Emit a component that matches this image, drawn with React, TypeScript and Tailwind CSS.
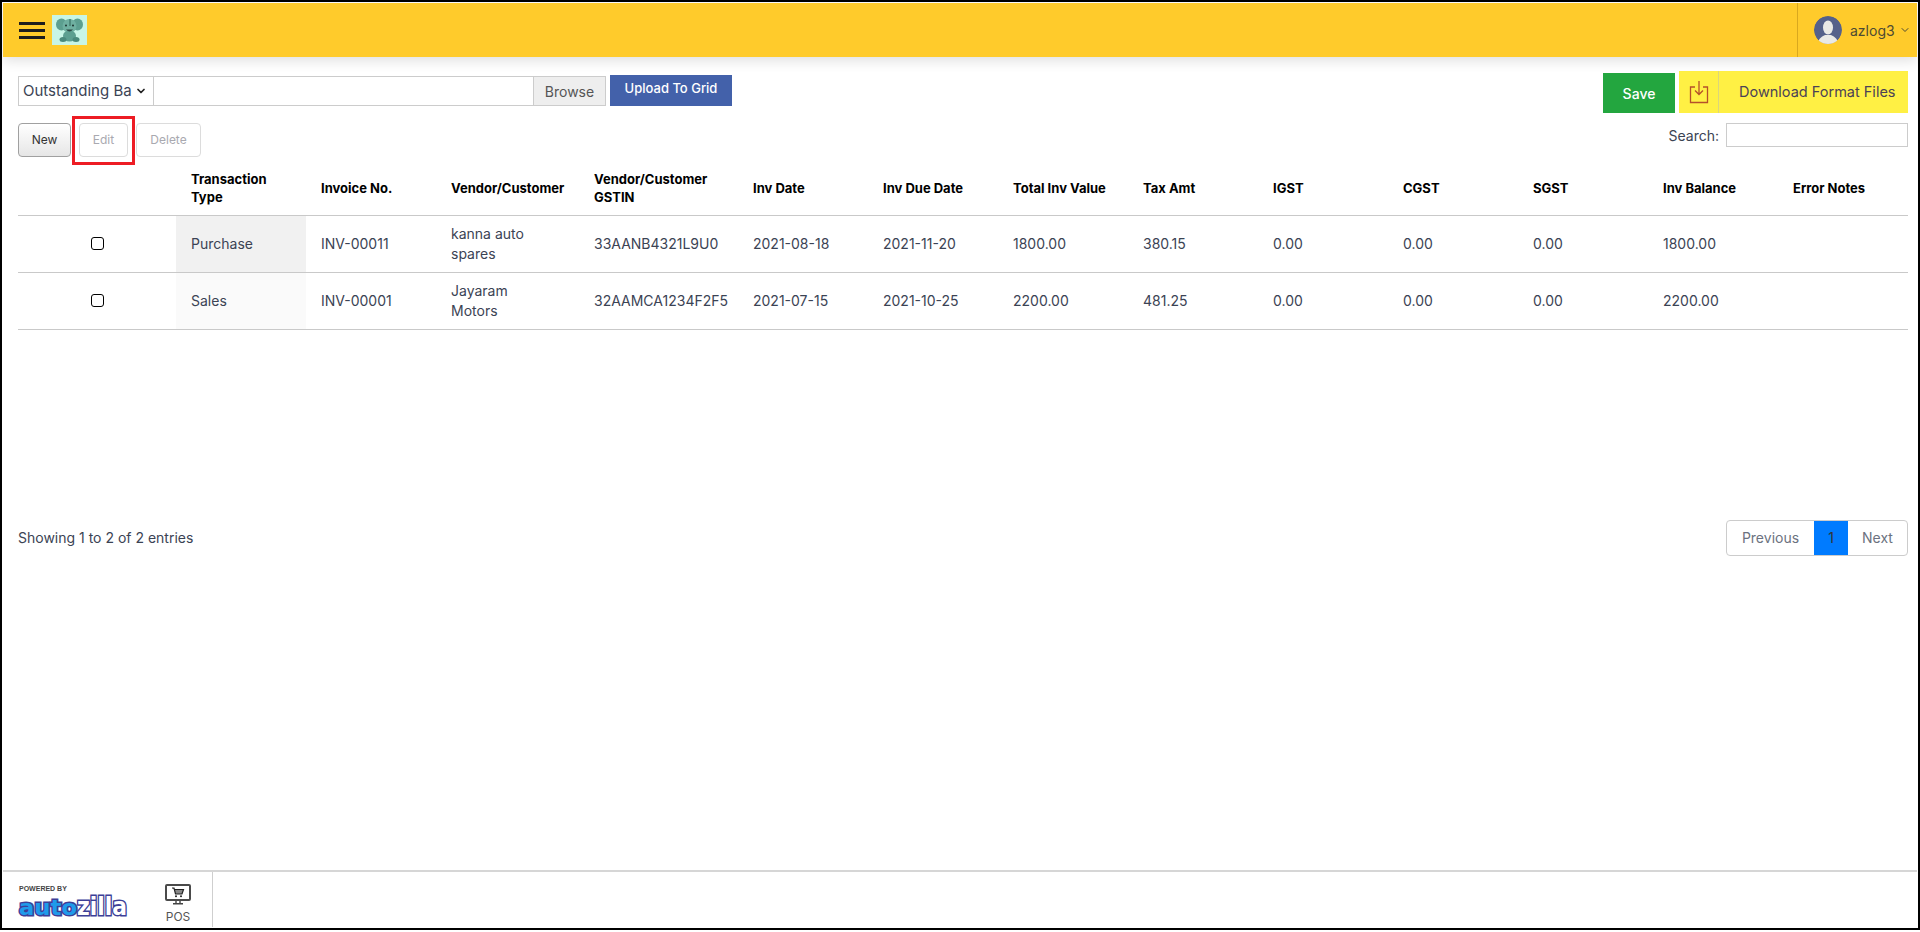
import { ChevronDown } from "lucide-react";

const columns = [
  { key: "pick", label: "", width: "w-[158px]" },
  { key: "type", label: "Transaction Type", width: "w-[130px]" },
  { key: "invoice", label: "Invoice No.", width: "w-[130px]" },
  { key: "party", label: "Vendor/Customer", width: "w-[143px]" },
  { key: "gstin", label: "Vendor/Customer GSTIN", width: "w-[159px]" },
  { key: "date", label: "Inv Date", width: "w-[130px]" },
  { key: "due", label: "Inv Due Date", width: "w-[130px]" },
  { key: "total", label: "Total Inv Value", width: "w-[130px]" },
  { key: "tax", label: "Tax Amt", width: "w-[130px]" },
  { key: "igst", label: "IGST", width: "w-[130px]" },
  { key: "cgst", label: "CGST", width: "w-[130px]" },
  { key: "sgst", label: "SGST", width: "w-[130px]" },
  { key: "balance", label: "Inv Balance", width: "w-[130px]" },
  { key: "notes", label: "Error Notes", width: "w-[130px]" },
];

const rows = [
  {
    type: "Purchase",
    shade: "bg-[#f1f1f1]",
    invoice: "INV-00011",
    party: "kanna auto\nspares",
    gstin: "33AANB4321L9U0",
    date: "2021-08-18",
    due: "2021-11-20",
    total: "1800.00",
    tax: "380.15",
    balance: "1800.00",
  },
  {
    type: "Sales",
    shade: "bg-[#fafafa]",
    invoice: "INV-00001",
    party: "Jayaram\nMotors",
    gstin: "32AAMCA1234F2F5",
    date: "2021-07-15",
    due: "2021-10-25",
    total: "2200.00",
    tax: "481.25",
    balance: "2200.00",
  },
];

function Elephant() {
  return (
    <svg viewBox="0 0 35 30" className="h-[30px] w-[35px] bg-[#c8f5e6]">
      <ellipse cx="9.500" cy="9.500" rx="5.500" ry="6" fill="#5c9f90" />
      <ellipse cx="25.500" cy="9.500" rx="5.500" ry="6" fill="#5c9f90" />
      <ellipse cx="17.500" cy="11" rx="7" ry="7" fill="#6fb0a1" />
      <ellipse cx="17.500" cy="21" rx="6.500" ry="5.500" fill="#5c9f90" />
      <ellipse cx="11" cy="24.500" rx="3.500" ry="2.500" fill="#4a8a7c" />
      <ellipse cx="24" cy="24.500" rx="3.500" ry="2.500" fill="#4a8a7c" />
      <path d="M14 14.500q3.500 4 7 0z" fill="#2c4a44" />
      <circle cx="14" cy="10.500" r="1" fill="#1d3531" />
      <circle cx="21" cy="10.500" r="1" fill="#1d3531" />
      <path d="M18 4v7" stroke="#457f72" strokeWidth="1.500" />
    </svg>
  );
}

function AutozillaLogo() {
  return (
    <svg viewBox="0 0 116 42" className="h-[42px] w-[116px]">
      <text x="2" y="5.500" fontFamily="Liberation Sans, sans-serif" fontSize="7" fontWeight="700" fill="#444">
        POWERED BY
      </text>
      <text
        x="2"
        y="30"
        fontFamily="DejaVu Sans, sans-serif"
        fontSize="22"
        fontWeight="700"
        fill="#1f9bea"
        stroke="#3d3f97"
        strokeWidth="3"
        paintOrder="stroke"
        textLength="58"
        lengthAdjust="spacingAndGlyphs"
      >
        auto
      </text>
      <text
        x="60"
        y="30"
        fontFamily="DejaVu Sans, sans-serif"
        fontSize="24"
        fontWeight="700"
        fill="#ffffff"
        stroke="#3d3f97"
        strokeWidth="3"
        paintOrder="stroke"
        textLength="50"
        lengthAdjust="spacingAndGlyphs"
      >
        zilla
      </text>
    </svg>
  );
}

function PosIcon() {
  return (
    <svg viewBox="0 0 26 21" className="h-[21px] w-[26px]">
      <rect x="1" y="1" width="24" height="15" rx="1" fill="#fff" stroke="#4a4a4a" strokeWidth="2" />
      <path d="M7 4h2l1.500 6h6.500l1.500-4.500h-9" fill="#888" stroke="#222" strokeWidth="1.200" />
      <circle cx="11" cy="12.300" r="1" fill="#222" />
      <circle cx="16" cy="12.300" r="1" fill="#222" />
      <path d="M8 19.800h10M11 17v2M15 17v2" stroke="#444" strokeWidth="1.400" />
    </svg>
  );
}

function Avatar() {
  return (
    <svg viewBox="0 0 28 28" className="h-7 w-7 rounded-full">
      <circle cx="14" cy="14" r="14" fill="#55618a" />
      <ellipse cx="14" cy="11.500" rx="5" ry="7" fill="#e9e9e6" />
      <path d="M4 28c0-6 5-8 7-9h6c2 1 7 3 7 9z" fill="#e9e9e6" />
    </svg>
  );
}

export default function App() {
  return (
    <div className="flex h-[930px] flex-col border-2 border-black bg-white p-px font-[Inter,sans-serif] text-[14px] text-[#3b4354]">
      <header className="z-10 flex h-[54px] shrink-0 items-center bg-[#ffcb2b] shadow-[0_4px_12px_rgba(0,0,0,0.12)]">
        <div className="ml-4 flex w-[26px] flex-col gap-[4px]">
          <span className="h-[3px] bg-[#1d1d1d]" />
          <span className="h-[3px] bg-[#1d1d1d]" />
          <span className="h-[3px] bg-[#1d1d1d]" />
        </div>
        <div className="ml-[7px]">
          <Elephant />
        </div>
        <div className="ml-auto flex h-full w-[120px] items-center gap-2 border-l border-[#d9a81f] pl-4">
          <Avatar />
          <span className="text-[14px] text-[#4d4a33]">azlog3</span>
          <ChevronDown className="-ml-1 h-3 w-3 text-[#4d4a33]" />
        </div>
      </header>

      <main className="flex flex-1 flex-col pl-[15px] pr-[9px]">
        <div className="mt-[14px] flex items-start justify-between">
          <div className="mt-[5px] flex items-start">
            <div className="flex h-[30px] w-[588px] border border-[#cccccc]">
              <div className="flex w-[135px] items-center justify-between border-r border-[#cccccc] pl-1 pr-[6px]">
                <span className="overflow-hidden whitespace-nowrap text-[15px]">Outstanding Ba</span>
                <ChevronDown className="h-3 w-3 shrink-0 text-[#222]" strokeWidth={3.5} />
              </div>
              <div className="flex-1" />
              <div className="flex w-[72px] items-center justify-center border-l border-[#cccccc] bg-[#eeeeee] text-[#555]">
                Browse
              </div>
            </div>
            <button className="-mt-px ml-1 h-[31px] w-[122px] bg-[#4361aa] pb-1 text-[13px] font-medium text-white">
              Upload To Grid
            </button>
          </div>
          <div className="flex items-start">
            <button className="mt-0.5 h-10 w-[72px] bg-[#23a63f] text-[14px] font-medium text-white">Save</button>
            <div className="ml-1 flex h-[42px] w-[229px] items-center bg-[#fff044]">
              <div className="flex h-full w-[40px] items-center justify-center border-r border-[#dcd67a]">
                <svg viewBox="0 0 20 24" className="h-6 w-5 text-[#b5502a]" fill="none" stroke="currentColor" strokeWidth="1.300">
                  <path d="M6 7H1.500v15.500h17V7H14" />
                  <path d="M10 1v13M6 10.500l4 4 4-4" />
                </svg>
              </div>
              <span className="ml-[20px] whitespace-nowrap text-[14.5px] text-[#4b4256]">Download Format Files</span>
            </div>
          </div>
        </div>

        <div className="mt-[10px] flex items-start justify-between">
          <div className="flex gap-2 text-[12px]">
            <button className="h-[34px] w-[53px] rounded-sm border border-[#a0a0a0] bg-gradient-to-b from-white to-[#e6e6e6] text-[#333]">
              New
            </button>
            <div className="relative">
              <button className="h-[34px] w-[49px] rounded-sm border border-[#dcdcdc] text-[#a9a9b0]">Edit</button>
              <span className="absolute -left-[7px] -top-[7px] h-[49px] w-[63px] border-[3px] border-[#ed1c24]" />
            </div>
            <button className="h-[34px] w-[65px] rounded-sm border border-[#dcdcdc] text-[#a9a9b0]">Delete</button>
          </div>
          <label className="flex items-center gap-[7px]">
            <span>Search:</span>
            <input className="h-6 w-[182px] border border-[#cccccc] outline-none" />
          </label>
        </div>

        <table className="w-[1890px] table-fixed border-collapse text-left">
          <thead>
            <tr className="h-[58px] border-b border-[#c9c9c9] text-[13px] font-bold leading-[18px] text-black">
              {columns.map((c) => (
                <th key={c.key} className={`${c.width} px-[15px] pt-[5px] font-bold`}>
                  {c.label}
                </th>
              ))}
            </tr>
          </thead>
          <tbody>
            {rows.map((r) => (
              <tr key={r.invoice} className="h-[57px] border-b border-[#c9c9c9] text-[14px] leading-5">
                <td className="text-center">
                  <input
                    type="checkbox"
                    className="mb-[2px] h-[13px] w-[13px] appearance-none rounded-[3px] border border-black bg-white align-middle"
                  />
                </td>
                <td className={`${r.shade} px-[15px]`}>{r.type}</td>
                <td className="px-[15px]">{r.invoice}</td>
                <td className="whitespace-pre-line px-[15px]">{r.party}</td>
                <td className="whitespace-nowrap px-[15px]">{r.gstin}</td>
                <td className="px-[15px]">{r.date}</td>
                <td className="px-[15px]">{r.due}</td>
                <td className="px-[15px]">{r.total}</td>
                <td className="px-[15px]">{r.tax}</td>
                <td className="px-[15px]">0.00</td>
                <td className="px-[15px]">0.00</td>
                <td className="px-[15px]">0.00</td>
                <td className="px-[15px]">{r.balance}</td>
                <td className="px-[15px]" />
              </tr>
            ))}
          </tbody>
        </table>

        <div className="mt-[190px] flex items-center justify-between">
          <span>Showing 1 to 2 of 2 entries</span>
          <div className="flex h-9 overflow-hidden rounded-sm border border-[#cccccc] text-[#6b7280]">
            <span className="flex w-[87px] items-center justify-center">Previous</span>
            <span className="flex w-[34px] items-center justify-center bg-[#007bff] text-[#333]">1</span>
            <span className="flex w-[59px] items-center justify-center">Next</span>
          </div>
        </div>
      </main>

      <footer className="flex h-[57px] shrink-0 border-t-2 border-[#d6d6d6]">
        <div className="flex w-[210px] border-r border-[#cfcfcf]">
          <div className="ml-[14px] mt-[13px]">
            <AutozillaLogo />
          </div>
          <div className="ml-[32px] mt-[12px] flex flex-col items-center gap-[4px] text-[12px] text-[#555]">
            <PosIcon />
            <span className="leading-4">POS</span>
          </div>
        </div>
      </footer>
    </div>
  );
}
